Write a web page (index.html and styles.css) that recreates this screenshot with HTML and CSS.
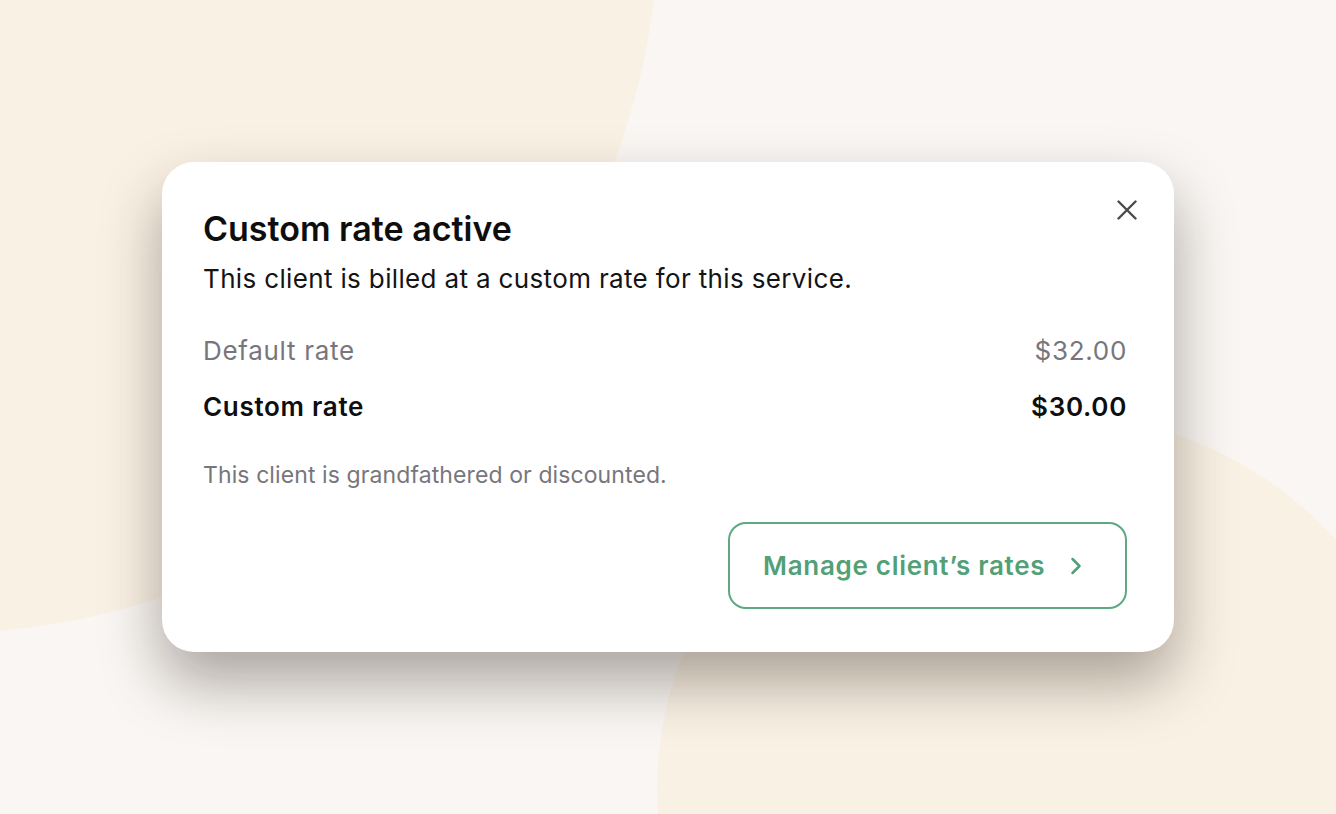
FILE: index.html
```html
<!DOCTYPE html>
<html lang="en">
<head>
<meta charset="utf-8">
<title>Custom rate active</title>
<link rel="stylesheet" href="styles.css">
</head>
<body>
<div class="stage">
  <div class="blob blob-left"></div>
  <div class="blob blob-right"></div>
  <section class="card">
    <button class="close" aria-label="Close">
      <svg width="20" height="20" viewBox="0 0 20 20"><path d="M1.5 1.5 L18.5 18.5 M18.5 1.5 L1.5 18.5" stroke="#4a4a4c" stroke-width="2.4" stroke-linecap="round" fill="none"/></svg>
    </button>
    <h1 class="title">Custom rate active</h1>
    <p class="subtitle">This client is billed at a custom rate for this service.</p>
    <div class="rates">
      <div class="row row-default"><span>Default rate</span><span>$32.00</span></div>
      <div class="row row-custom"><span>Custom rate</span><span>$30.00</span></div>
    </div>
    <p class="note">This client is grandfathered or discounted.</p>
    <div class="actions">
      <button class="manage">
        <span>Manage client’s rates</span>
        <svg width="12" height="18" viewBox="0 0 12 18"><path d="M2.5 2 L9.5 9 L2.5 16" stroke="#53a077" stroke-width="2.5" stroke-linecap="round" stroke-linejoin="round" fill="none"/></svg>
      </button>
    </div>
  </section>
</div>
</body>
</html>
```

FILE: styles.css
```css
* { box-sizing: border-box; }
html, body { margin: 0; padding: 0; }
body {
  width: 1336px;
  height: 814px;
  overflow: hidden;
  background: #f9f6f3;
  font-family: Inter, "Noto Sans", "Liberation Sans", sans-serif;
}
.stage {
  position: relative;
  width: 1336px;
  height: 814px;
  overflow: hidden;
  padding-top: 162px;
  padding-left: 162px;
}
.blob {
  position: absolute;
  background: #faf1e5;
  border-radius: 50%;
}
.blob-left {
  left: -792px;
  top: -818px;
  width: 1452px;
  height: 1452px;
}
.blob-right {
  left: 657px;
  top: 412px;
  width: 776px;
  height: 756px;
}
.card {
  position: relative;
  width: 1012px;
  height: 490px;
  background: #ffffff;
  border-radius: 32px;
  box-shadow: 0 30px 60px rgba(30, 20, 10, 0.36);
  padding: 41px 47px 0 41px;
  color: #111111;
}
.close {
  position: absolute;
  top: 38px;
  right: 37px;
  width: 20px;
  height: 20px;
  padding: 0;
  border: 0;
  background: none;
  display: flex;
}
.title {
  margin: 0;
  font-size: 34px;
  font-weight: 600;
  letter-spacing: 0;
  line-height: 52px;
  color: #0e0e0e;
}
.subtitle {
  margin: 0;
  font-size: 26px;
  line-height: 48px;
  letter-spacing: 0.35px;
  color: #141414;
}
.rates {
  margin-top: 28px;
  display: flex;
  flex-direction: column;
  gap: 16px;
}
.row {
  display: flex;
  justify-content: space-between;
  font-size: 26px;
  line-height: 40px;
  letter-spacing: 0.7px;
}
.row-default { color: #77767c; }
.row-custom { font-weight: 600; color: #0e0e0e; }
.note {
  margin: 28px 0 0;
  font-size: 23px;
  line-height: 40px;
  letter-spacing: 0.1px;
  color: #77767c;
}
.actions {
  margin-top: 27px;
  display: flex;
  justify-content: flex-end;
}
.manage {
  width: 399px;
  height: 87px;
  border: 2px solid #5ea882;
  border-radius: 18px;
  background: #ffffff;
  padding: 0 43px 0 33px;
  display: flex;
  align-items: center;
  justify-content: space-between;
  font-family: inherit;
  font-size: 26px;
  font-weight: 600;
  letter-spacing: 0.7px;
  color: #53a077;
}
```
